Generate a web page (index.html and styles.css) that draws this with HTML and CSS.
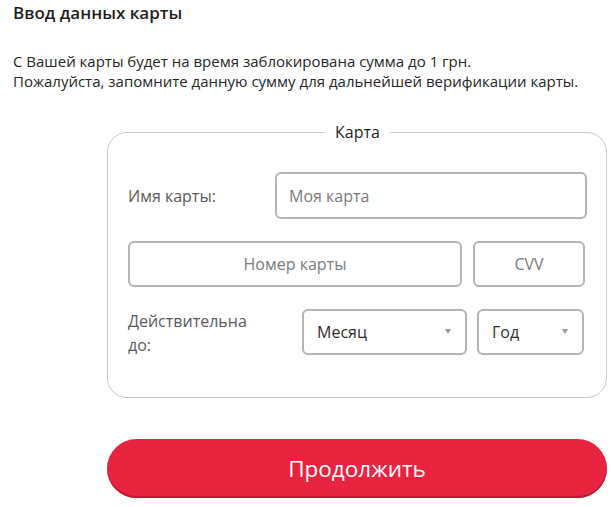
FILE: index.html
```html
<!DOCTYPE html>
<html lang="ru">
<head>
<meta charset="utf-8">
<title>Ввод данных карты</title>
<link rel="stylesheet" href="styles.css">
</head>
<body>
<div class="page">
  <h1 class="title">Ввод данных карты</h1>
  <p class="note">С Вашей карты будет на время заблокирована сумма до 1 грн.<br>Пожалуйста, запомните данную сумму для дальнейшей верификации карты.</p>
  <fieldset class="card">
    <legend class="card-legend">Карта</legend>
    <div class="row">
      <label class="label label-name">Имя карты:</label>
      <input class="field field-name" type="text" placeholder="Моя карта">
    </div>
    <div class="row">
      <input class="field field-number" type="text" placeholder="Номер карты">
      <input class="field field-cvv" type="text" placeholder="CVV">
    </div>
    <div class="row row-date">
      <label class="label label-date">Действительна до:</label>
      <div class="select select-month"><span>Месяц</span><svg class="arrow" width="6" height="5" viewBox="0 0 6 5"><path d="M0 0h6L3 5z" fill="#9a9a9a"/></svg></div>
      <div class="select select-year"><span>Год</span><svg class="arrow" width="6" height="5" viewBox="0 0 6 5"><path d="M0 0h6L3 5z" fill="#9a9a9a"/></svg></div>
    </div>
  </fieldset>
  <button class="submit" type="button">Продолжить</button>
</div>
</body>
</html>
```
FILE: styles.css
```css
* { box-sizing: border-box; }
html, body { margin: 0; padding: 0; background: #fff; }
body { font-family: "Open Sans", "Noto Sans", sans-serif; color: #333; }

.page { padding: 1px 0 0 13px; width: 611px; }

.title {
  margin: 0;
  font-size: 17px;
  line-height: 24px;
  font-weight: 600;
  color: #1e1e1e;
}

.note {
  margin: 26px 0 0 0;
  font-size: 15px;
  line-height: 20px;
  color: #262626;
}

.card {
  margin: 31px 0 0 94px;
  width: 500px;
  border: 1px solid #c9c9c9;
  border-radius: 20px;
  padding: 30px 19px 40px 20px;
  min-width: 0;
}

.card-legend {
  margin: 0 auto;
  padding: 0 10px;
  font-size: 16px;
  line-height: 20px;
  font-weight: 500;
  color: #1e1e1e;
}

.row { display: flex; align-items: center; }
.row + .row { margin-top: 22px; }
.row-date { align-items: flex-start; margin-top: 22px; }

.label {
  font-size: 16px;
  line-height: 24px;
  color: #5a5a5a;
}
.label-name { width: 147px; flex: none; }
.label-date { width: 125px; flex: none; margin-right: 49px; }

.field {
  height: 47px;
  border: 2px solid #b4b4b4;
  border-radius: 6px;
  font-family: inherit;
  font-size: 16px;
  color: #333;
  background: #fff;
  outline: none;
  padding: 0 12px;
}
.field::placeholder { color: #7a7a7a; }
.field-name { flex: 1; }
.field-number { width: 334px; height: 46px; text-align: center; }
.field-cvv { width: 112px; height: 46px; margin-left: 11px; text-align: center; }

.select {
  display: flex;
  align-items: center;
  height: 46px;
  border: 2px solid #b4b4b4;
  border-radius: 6px;
  padding: 0 14px 0 13px;
  font-size: 16px;
  color: #2e2e2e;
  background: #fff;
}
.select .arrow { margin-left: auto; margin-top: -2px; }
.select-month { width: 165px; }
.select-year { width: 107px; margin-left: 10px; }

.submit {
  display: block;
  margin: 41px 0 0 94px;
  width: 500px;
  height: 59px;
  border: none;
  border-radius: 30px;
  background: #e8233f;
  box-shadow: inset 0 -2px 0 #b81a31;
  color: #fff;
  font-family: inherit;
  font-size: 22.5px;
  padding: 0;
}
```
